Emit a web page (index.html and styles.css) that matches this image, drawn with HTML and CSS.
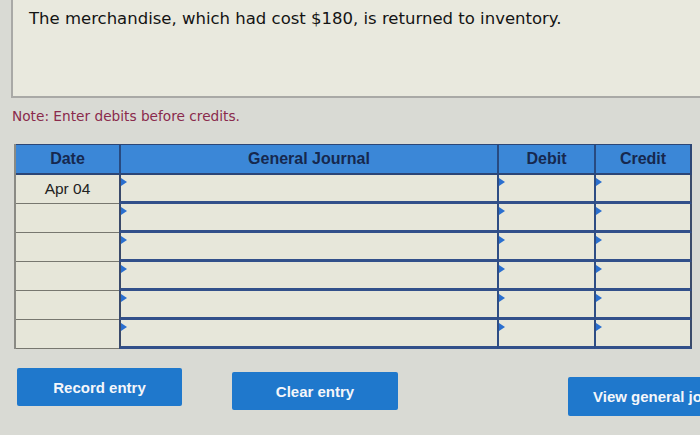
FILE: index.html
```html
<!DOCTYPE html>
<html>
<head>
<meta charset="utf-8">
<link rel="stylesheet" href="styles.css">
</head>
<body>
<div class="page">
  <div class="question">The merchandise, which had cost $180, is returned to inventory.</div>
  <div class="note">Note: Enter debits before credits.</div>
  <div class="journal">
    <div class="head h-date">Date</div>
    <div class="head h-gj">General Journal</div>
    <div class="head h-debit">Debit</div>
    <div class="head h-credit">Credit</div>

    <div class="date">Apr 04</div><div class="cell first"><span class="tri"></span></div><div class="cell"><span class="tri"></span></div><div class="cell last"><span class="tri"></span></div>
    <div class="date"></div><div class="cell first"><span class="tri"></span></div><div class="cell"><span class="tri"></span></div><div class="cell last"><span class="tri"></span></div>
    <div class="date"></div><div class="cell first"><span class="tri"></span></div><div class="cell"><span class="tri"></span></div><div class="cell last"><span class="tri"></span></div>
    <div class="date"></div><div class="cell first"><span class="tri"></span></div><div class="cell"><span class="tri"></span></div><div class="cell last"><span class="tri"></span></div>
    <div class="date"></div><div class="cell first"><span class="tri"></span></div><div class="cell"><span class="tri"></span></div><div class="cell last"><span class="tri"></span></div>
    <div class="date"></div><div class="cell first"><span class="tri"></span></div><div class="cell"><span class="tri"></span></div><div class="cell last"><span class="tri"></span></div>
  </div>
  <div class="buttons">
    <button class="btn b-record">Record entry</button>
    <button class="btn b-clear">Clear entry</button>
    <button class="btn b-view">View general journal</button>
  </div>
</div>
</body>
</html>
```
FILE: styles.css
```css
html, body {
  margin: 0;
  padding: 0;
}
body {
  width: 700px;
  height: 435px;
  overflow: hidden;
  background: #d9dad4;
}
.page {
  width: 700px;
  height: 435px;
  overflow: hidden;
}
.question {
  margin-left: 11px;
  height: 87px;
  padding: 9px 0 0 16px;
  background: #e9e9de;
  border-left: 2px solid #a9a9a6;
  border-bottom: 2px solid #a9a9a6;
  font-family: "DejaVu Sans", Verdana, sans-serif;
  font-size: 16.5px;
  color: #141414;
  white-space: nowrap;
}
.note {
  margin: 10px 0 0 12px;
  height: 20px;
  font-family: "DejaVu Sans", Verdana, sans-serif;
  font-size: 13.7px;
  color: #8a2a4c;
}
.journal {
  margin: 16px 0 0 14px;
  width: 676px;
  display: grid;
  grid-template-columns: 103px 378px 97px 98px;
  grid-template-rows: 31px repeat(6, 29px);
  border-left: 2px solid #8a8a84;
  box-sizing: border-box;
  font-family: "Liberation Sans", Arial, sans-serif;
}
.head {
  background: #3b87d7;
  color: #16284e;
  font-weight: bold;
  font-size: 16px;
  display: flex;
  align-items: center;
  justify-content: center;
  border-bottom: 2px solid #2c4676;
  border-left: 2px solid #284a80;
  border-top: 1px solid #2c4676;
}
.h-date { border-left: none; }
.h-credit { border-right: 2px solid #2c4676; }
.date {
  background: #e6e6d9;
  border-bottom: 1px solid #77776f;
  display: flex;
  align-items: center;
  justify-content: center;
  font-size: 15.5px;
  color: #222;
}
.cell {
  position: relative;
  background: #e7e7da;
  border-left: 2px solid #2e4d84;
  border-bottom: 3px solid #32508a;
}
.cell.first { border-left: 2px solid #3a4a6a; }
.cell.last { border-right: 2px solid #3a4a6a; }
.tri {
  position: absolute;
  left: 0;
  top: 3px;
  width: 0;
  height: 0;
  border-top: 4px solid transparent;
  border-bottom: 4px solid transparent;
  border-left: 6px solid #2a6fcf;
}
.buttons {
  display: flex;
  align-items: flex-start;
  margin-top: 19px;
}
.btn {
  font-family: "Liberation Sans", Arial, sans-serif;
  font-weight: bold;
  font-size: 15px;
  color: #f4f6fa;
  background: #1f78cc;
  border: none;
  border-radius: 2px;
  height: 38px;
  padding: 0;
  white-space: nowrap;
  text-align: center;
  flex: none;
}
.b-record {
  margin-left: 17px;
  width: 165px;
}
.b-clear {
  margin-left: 50px;
  margin-top: 4px;
  width: 166px;
}
.b-view {
  margin-left: 170px;
  margin-top: 9px;
  width: 170px;
  height: 39px;
  text-align: left;
  padding-left: 25px;
}
```
